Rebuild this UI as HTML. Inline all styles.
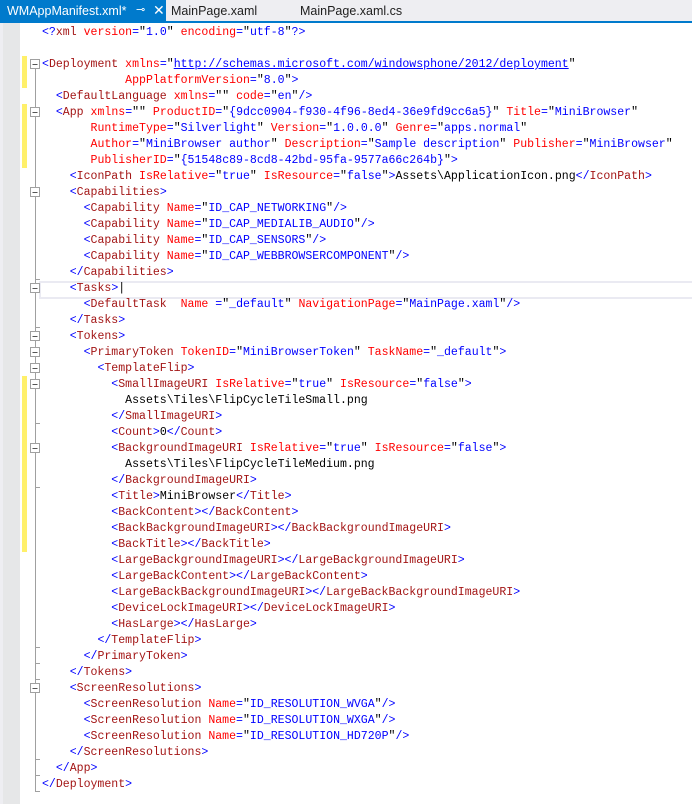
<!DOCTYPE html>
<html><head><meta charset="utf-8"><style>
body{margin:0;width:692px;height:804px;overflow:hidden;background:#fff;position:relative;font-family:"Liberation Sans",sans-serif}
#tabs{position:absolute;left:0;top:0;width:692px;height:21px;background:#eeeef2}
#bl{position:absolute;left:0;top:21px;width:692px;height:2px;background:#007acc}
#act{position:absolute;left:0;top:0;width:166px;height:23px;background:#007acc;color:#fff;font-size:12.5px}
.tab{position:absolute;top:4px;font-size:12.5px;color:#1e1e1e}
#gut{position:absolute;left:0;top:23px;width:20px;height:781px;background:#e6e7e8;border-left:3px solid #eeeef2;box-sizing:border-box}
pre{position:absolute;left:42px;top:25px;margin:0;font-family:"Liberation Mono",monospace;font-size:11.55px;line-height:16px;color:#000}
.t{color:#0000ff}.n{color:#a31515}.a{color:#ff0000}.v{color:#0000ff}
.u{text-decoration:underline}
#cur{position:absolute;left:39px;top:281px;width:660px;height:14px;border:2px solid #eaeaf2;border-right:none}
</style></head><body>
<div id="tabs"></div><div id="bl"></div>
<div id="act"><span style="position:absolute;left:7px;top:4px">WMAppManifest.xml*</span><span style="position:absolute;left:136px;top:3px;font-size:11px">⊸</span><span style="position:absolute;left:153px;top:2px;font-size:14px">✕</span></div>
<div class="tab" style="left:171px">MainPage.xaml</div>
<div class="tab" style="left:300px">MainPage.xaml.cs</div>
<div id="gut"></div>
<div id="cur"></div>
<svg style="position:absolute;left:0;top:0" width="60" height="804">
<g fill="#fff06a"><rect x="22" y="56" width="5" height="32"/><rect x="22" y="104" width="5" height="64"/><rect x="22" y="376" width="5" height="176"/></g>
<g stroke="#a0a0a0" stroke-width="1" fill="#fff">
<path d="M35.5 64V791.5H40M35.5 112V775.5H40M35.5 192V279.5H40M35.5 288V327.5H40M35.5 336V679.5H40M35.5 352V663.5H40M35.5 368V647.5H40M35.5 384V423.5H40M35.5 448V487.5H40M35.5 688V759.5H40" fill="none"/>
<rect x="30.5" y="59.5" width="9" height="9"/><rect x="30.5" y="107.5" width="9" height="9"/><rect x="30.5" y="187.5" width="9" height="9"/><rect x="30.5" y="283.5" width="9" height="9"/><rect x="30.5" y="331.5" width="9" height="9"/><rect x="30.5" y="347.5" width="9" height="9"/><rect x="30.5" y="363.5" width="9" height="9"/><rect x="30.5" y="379.5" width="9" height="9"/><rect x="30.5" y="443.5" width="9" height="9"/><rect x="30.5" y="683.5" width="9" height="9"/>
</g>
<g stroke="#555" stroke-width="1"><path d="M32.5 64.5h5M32.5 112.5h5M32.5 192.5h5M32.5 288.5h5M32.5 336.5h5M32.5 352.5h5M32.5 368.5h5M32.5 384.5h5M32.5 448.5h5M32.5 688.5h5"/></g>
</svg>
<pre><span class="t">&lt;?</span><span class="n">xml</span> <span class="a">version</span><span class="t">=</span>"<span class="v">1.0</span>" <span class="a">encoding</span><span class="t">=</span>"<span class="v">utf-8</span>"<span class="t">?&gt;</span>

<span class="t">&lt;</span><span class="n">Deployment</span> <span class="a">xmlns</span><span class="t">=</span>"<span class="v u">http://schemas.microsoft.com/windowsphone/2012/deployment</span>"
            <span class="a">AppPlatformVersion</span><span class="t">=</span>"<span class="v">8.0</span>"<span class="t">&gt;</span>
  <span class="t">&lt;</span><span class="n">DefaultLanguage</span> <span class="a">xmlns</span><span class="t">=</span>"" <span class="a">code</span><span class="t">=</span>"<span class="v">en</span>"<span class="t">/&gt;</span>
  <span class="t">&lt;</span><span class="n">App</span> <span class="a">xmlns</span><span class="t">=</span>"" <span class="a">ProductID</span><span class="t">=</span>"<span class="v">{9dcc0904-f930-4f96-8ed4-36e9fd9cc6a5}</span>" <span class="a">Title</span><span class="t">=</span>"<span class="v">MiniBrowser</span>"
       <span class="a">RuntimeType</span><span class="t">=</span>"<span class="v">Silverlight</span>" <span class="a">Version</span><span class="t">=</span>"<span class="v">1.0.0.0</span>" <span class="a">Genre</span><span class="t">=</span>"<span class="v">apps.normal</span>"
       <span class="a">Author</span><span class="t">=</span>"<span class="v">MiniBrowser author</span>" <span class="a">Description</span><span class="t">=</span>"<span class="v">Sample description</span>" <span class="a">Publisher</span><span class="t">=</span>"<span class="v">MiniBrowser</span>"
       <span class="a">PublisherID</span><span class="t">=</span>"<span class="v">{51548c89-8cd8-42bd-95fa-9577a66c264b}</span>"<span class="t">&gt;</span>
    <span class="t">&lt;</span><span class="n">IconPath</span> <span class="a">IsRelative</span><span class="t">=</span>"<span class="v">true</span>" <span class="a">IsResource</span><span class="t">=</span>"<span class="v">false</span>"<span class="t">&gt;</span>Assets\ApplicationIcon.png<span class="t">&lt;/</span><span class="n">IconPath</span><span class="t">&gt;</span>
    <span class="t">&lt;</span><span class="n">Capabilities</span><span class="t">&gt;</span>
      <span class="t">&lt;</span><span class="n">Capability</span> <span class="a">Name</span><span class="t">=</span>"<span class="v">ID_CAP_NETWORKING</span>"<span class="t">/&gt;</span>
      <span class="t">&lt;</span><span class="n">Capability</span> <span class="a">Name</span><span class="t">=</span>"<span class="v">ID_CAP_MEDIALIB_AUDIO</span>"<span class="t">/&gt;</span>
      <span class="t">&lt;</span><span class="n">Capability</span> <span class="a">Name</span><span class="t">=</span>"<span class="v">ID_CAP_SENSORS</span>"<span class="t">/&gt;</span>
      <span class="t">&lt;</span><span class="n">Capability</span> <span class="a">Name</span><span class="t">=</span>"<span class="v">ID_CAP_WEBBROWSERCOMPONENT</span>"<span class="t">/&gt;</span>
    <span class="t">&lt;/</span><span class="n">Capabilities</span><span class="t">&gt;</span>
    <span class="t">&lt;</span><span class="n">Tasks</span><span class="t">&gt;</span>|
      <span class="t">&lt;</span><span class="n">DefaultTask</span>  <span class="a">Name</span> <span class="t">=</span>"<span class="v">_default</span>" <span class="a">NavigationPage</span><span class="t">=</span>"<span class="v">MainPage.xaml</span>"<span class="t">/&gt;</span>
    <span class="t">&lt;/</span><span class="n">Tasks</span><span class="t">&gt;</span>
    <span class="t">&lt;</span><span class="n">Tokens</span><span class="t">&gt;</span>
      <span class="t">&lt;</span><span class="n">PrimaryToken</span> <span class="a">TokenID</span><span class="t">=</span>"<span class="v">MiniBrowserToken</span>" <span class="a">TaskName</span><span class="t">=</span>"<span class="v">_default</span>"<span class="t">&gt;</span>
        <span class="t">&lt;</span><span class="n">TemplateFlip</span><span class="t">&gt;</span>
          <span class="t">&lt;</span><span class="n">SmallImageURI</span> <span class="a">IsRelative</span><span class="t">=</span>"<span class="v">true</span>" <span class="a">IsResource</span><span class="t">=</span>"<span class="v">false</span>"<span class="t">&gt;</span>
            Assets\Tiles\FlipCycleTileSmall.png
          <span class="t">&lt;/</span><span class="n">SmallImageURI</span><span class="t">&gt;</span>
          <span class="t">&lt;</span><span class="n">Count</span><span class="t">&gt;</span>0<span class="t">&lt;/</span><span class="n">Count</span><span class="t">&gt;</span>
          <span class="t">&lt;</span><span class="n">BackgroundImageURI</span> <span class="a">IsRelative</span><span class="t">=</span>"<span class="v">true</span>" <span class="a">IsResource</span><span class="t">=</span>"<span class="v">false</span>"<span class="t">&gt;</span>
            Assets\Tiles\FlipCycleTileMedium.png
          <span class="t">&lt;/</span><span class="n">BackgroundImageURI</span><span class="t">&gt;</span>
          <span class="t">&lt;</span><span class="n">Title</span><span class="t">&gt;</span>MiniBrowser<span class="t">&lt;/</span><span class="n">Title</span><span class="t">&gt;</span>
          <span class="t">&lt;</span><span class="n">BackContent</span><span class="t">&gt;&lt;/</span><span class="n">BackContent</span><span class="t">&gt;</span>
          <span class="t">&lt;</span><span class="n">BackBackgroundImageURI</span><span class="t">&gt;&lt;/</span><span class="n">BackBackgroundImageURI</span><span class="t">&gt;</span>
          <span class="t">&lt;</span><span class="n">BackTitle</span><span class="t">&gt;&lt;/</span><span class="n">BackTitle</span><span class="t">&gt;</span>
          <span class="t">&lt;</span><span class="n">LargeBackgroundImageURI</span><span class="t">&gt;&lt;/</span><span class="n">LargeBackgroundImageURI</span><span class="t">&gt;</span>
          <span class="t">&lt;</span><span class="n">LargeBackContent</span><span class="t">&gt;&lt;/</span><span class="n">LargeBackContent</span><span class="t">&gt;</span>
          <span class="t">&lt;</span><span class="n">LargeBackBackgroundImageURI</span><span class="t">&gt;&lt;/</span><span class="n">LargeBackBackgroundImageURI</span><span class="t">&gt;</span>
          <span class="t">&lt;</span><span class="n">DeviceLockImageURI</span><span class="t">&gt;&lt;/</span><span class="n">DeviceLockImageURI</span><span class="t">&gt;</span>
          <span class="t">&lt;</span><span class="n">HasLarge</span><span class="t">&gt;&lt;/</span><span class="n">HasLarge</span><span class="t">&gt;</span>
        <span class="t">&lt;/</span><span class="n">TemplateFlip</span><span class="t">&gt;</span>
      <span class="t">&lt;/</span><span class="n">PrimaryToken</span><span class="t">&gt;</span>
    <span class="t">&lt;/</span><span class="n">Tokens</span><span class="t">&gt;</span>
    <span class="t">&lt;</span><span class="n">ScreenResolutions</span><span class="t">&gt;</span>
      <span class="t">&lt;</span><span class="n">ScreenResolution</span> <span class="a">Name</span><span class="t">=</span>"<span class="v">ID_RESOLUTION_WVGA</span>"<span class="t">/&gt;</span>
      <span class="t">&lt;</span><span class="n">ScreenResolution</span> <span class="a">Name</span><span class="t">=</span>"<span class="v">ID_RESOLUTION_WXGA</span>"<span class="t">/&gt;</span>
      <span class="t">&lt;</span><span class="n">ScreenResolution</span> <span class="a">Name</span><span class="t">=</span>"<span class="v">ID_RESOLUTION_HD720P</span>"<span class="t">/&gt;</span>
    <span class="t">&lt;/</span><span class="n">ScreenResolutions</span><span class="t">&gt;</span>
  <span class="t">&lt;/</span><span class="n">App</span><span class="t">&gt;</span>
<span class="t">&lt;/</span><span class="n">Deployment</span><span class="t">&gt;</span></pre>
</body></html>
